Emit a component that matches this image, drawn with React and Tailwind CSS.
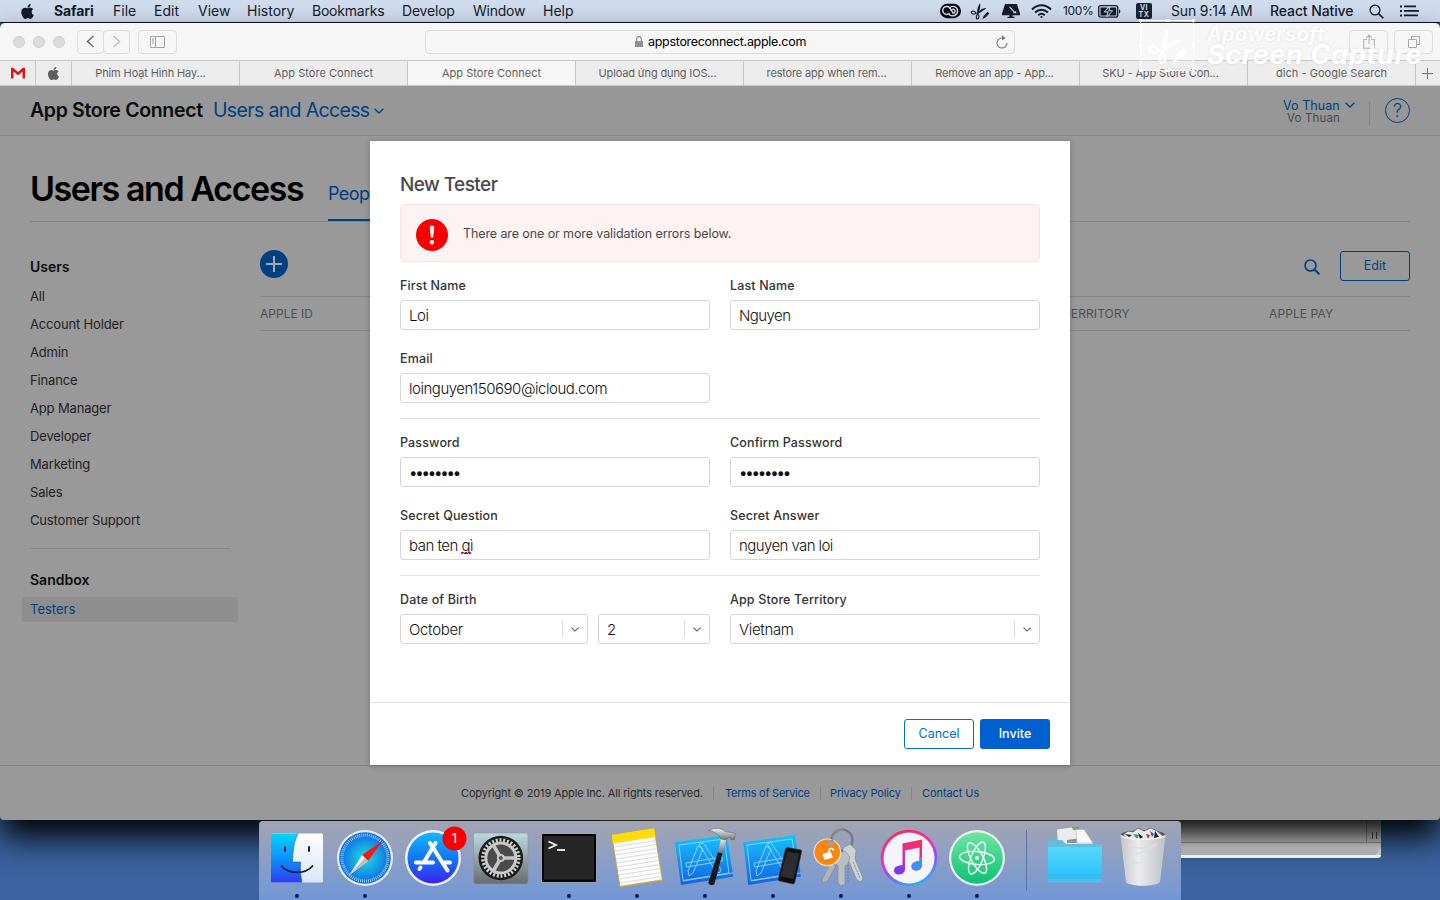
import React from "react";
import { FaApple } from "react-icons/fa";

const menus = [
  ["Safari", "w-[59px] font-bold tracking-[-0.1px]"],
  ["File", "w-[41px]"],
  ["Edit", "w-[44px]"],
  ["View", "w-[49px]"],
  ["History", "w-[65px]"],
  ["Bookmarks", "w-[90px] tracking-[-0.22px]"],
  ["Develop", "w-[71px] tracking-[-0.2px]"],
  ["Window", "w-[70px] tracking-[-0.25px]"],
  ["Help", "w-[40px]"],
];

function Scissors({ className, pencil }) {
  return (
    <svg viewBox="0 0 40 36" className={className} fill="none" stroke="currentColor">
      <ellipse cx="6" cy="20.5" rx="4.6" ry="3" strokeWidth="2.4" transform="rotate(12 6 20.5)" />
      <ellipse cx="15" cy="29" rx="2.7" ry="4.8" strokeWidth="2.4" transform="rotate(8 15 29)" />
      <path d="M9.5 21.5 L16 22.5 L33 11.5 C30 11 25 12 21 15 L16 20Z" fill="currentColor" strokeWidth="0.5" />
      <path d="M15.5 25 L14 20 C14 12 17 5 20 1 C21 6 20 13 17.5 19Z" fill="currentColor" strokeWidth="0.5" />
      {pencil && <path d="M36 18.5 L40 22 L31 31 L25 34 L27.5 27.5Z" fill="currentColor" stroke="none" />}
    </svg>
  );
}

function MenuBar() {
  return (
    <div className="flex h-[23px] shrink-0 items-center border-b border-[#06101f] bg-[#cfdcee] text-[14px] leading-[22px] text-[#141b2b]">
      <FaApple className="mr-[18px] ml-[19px] h-[17px] w-[17px]" />
      {menus.map(([label, cls]) => (
        <span key={label} className={"shrink-0 whitespace-nowrap " + cls}>{label}</span>
      ))}
      <div className="ml-auto flex items-center">
        <svg className="mr-[9px] h-[16px] w-[21px]" viewBox="0 0 22 16">
          <path d="M7.500.500h7a7.500 7.500 0 0 1 0 15h-7a7.500 7.500 0 0 1 0-15Z" fill="#05070d" />
          <g fill="none" stroke="#cfdcee" strokeWidth="1.500" strokeLinecap="round">
            <path d="M9.800 10.600A4.200 4.200 0 1 1 10.600 5.200L13.500 9.600" />
            <path d="M9.400 11.600c3.200 2.600 9 1.500 9-3.600 0-5-6-6.200-8.400-3" />
            <path d="M11.800 7.200c1-2 4-1.200 4 .9 0 1.500-1.200 2.200-2.600 2.100" />
          </g>
        </svg>
        <Scissors pencil className="mr-[12px] h-[17px] w-[20px]" />
        <svg className="mr-[11px] h-[16px] w-[18px]" viewBox="0 0 18 16" fill="#141b2b">
          <path d="M3 1h12l3 9.500H0Z" />
          <path d="M0 10h18v2.200H0zM7.500 12h3v2h-3zM5.500 13.800h7V15h-7z" />
          <path d="m7.600 3.800 5.200 5.800" stroke="#cfdcee" strokeWidth="1.100" />
          <path d="M11.300 9.200 14 8l.5 2.200h-3Z" fill="#cfdcee" />
        </svg>
        <svg className="mr-[11px] h-[15px] w-[21px]" viewBox="0 0 21 15" fill="none" stroke="#141b2b" strokeWidth="1.900">
          <path d="M1 5.500C6.500-.2 14.500-.2 20 5.500M4 8.500c3.800-3.700 9.200-3.700 13 0M7.200 11.300c2-1.900 4.600-1.900 6.600 0" />
          <circle cx="10.500" cy="13" r="1.100" fill="#141b2b" stroke="none" />
        </svg>
        <span className="mr-[4px] w-[31px] text-[12px] tracking-[-0.3px]">100%</span>
        <svg className="mr-[15px] h-[13px] w-[23px]" viewBox="0 0 23 13">
          <rect x=".7" y=".7" width="19" height="11.500" rx="2" fill="none" stroke="#141b2b" strokeWidth="1.300" />
          <path d="M2.500 2.500h7L5.800 7.300h3.700L8.500 10.500h-6ZM12.500 2.500h5.700v8H11l3.600-5h-3.400Z" fill="#141b2b" />
          <path d="m12 1-5.500 5.800h3.800L8.700 12l6-6.200h-4Z" fill="#141b2b" stroke="#cfdcee" strokeWidth=".8" />
          <path d="M21 4.500c1.800.5 1.800 3.500 0 4Z" fill="#141b2b" />
        </svg>
        <div className="mr-[19px] flex h-[16px] w-[16px] flex-col items-center justify-center rounded-[2px] bg-[#1b2333] text-[7px] leading-[7px] font-bold tracking-[0.5px] text-[#cfdcee]">
          <span>VI</span>
          <span>TX</span>
        </div>
        <span className="w-[99px] whitespace-nowrap tracking-[-0.15px]">Sun 9:14 AM</span>
        <span className="w-[99px] whitespace-nowrap font-medium tracking-[-0.1px]">React Native</span>
        <svg className="mr-[16px] h-[15px] w-[15px]" viewBox="0 0 15 15" fill="none" stroke="#141b2b" strokeWidth="1.300">
          <circle cx="6" cy="6" r="4.900" />
          <path d="m9.600 9.600 4.700 4.700" strokeWidth="1.600" />
        </svg>
        <svg className="mr-[21px] h-[12px] w-[19px]" viewBox="0 0 19 12" fill="#141b2b">
          <path d="M0 .5h2v2H0zM0 5h2v2H0zM0 9.500h2v2H0zM4 .5h12v1.800H4zM4 5h15v1.800H4zM4 9.500h14v1.800H4z" />
        </svg>
      </div>
    </div>
  );
}

const btn = "flex h-[24px] items-center justify-center rounded-[4px] border border-[#dcdcdc] bg-[#f6f6f6]";

function Toolbar() {
  return (
    <div className="flex h-[37px] shrink-0 items-center rounded-t-[5px] bg-[#f6f6f6]">
      <div className="ml-[13px] flex gap-[8px]">
        {[0, 1, 2].map((i) => (
          <span key={i} className="h-[12px] w-[12px] rounded-full border border-[#cecece] bg-[#dcdcdc]" />
        ))}
      </div>
      <div className={btn + " ml-[12px] w-[27px]"}>
        <svg className="h-[13px] w-[9px]" viewBox="0 0 9 13" fill="none" stroke="#6c6c6c" strokeWidth="1.500"><path d="M7.500 1 1.500 6.500l6 5.500" /></svg>
      </div>
      <div className={btn + " -ml-px w-[27px]"}>
        <svg className="h-[13px] w-[9px]" viewBox="0 0 9 13" fill="none" stroke="#bcbcbc" strokeWidth="1.400"><path d="m1.500 1 6 5.500-6 5.500" /></svg>
      </div>
      <div className={btn + " ml-[8px] w-[39px]"}>
        <svg className="h-[12px] w-[15px]" viewBox="0 0 15 12" fill="none" stroke="#a4a4a4"><path d="M.5.5h14v11H.5zM5.500.5v11M2 3h2M2 5h2M2 7h2" /></svg>
      </div>
      <div className="ml-[248px] flex h-[24px] w-[590px] items-center rounded-[4px] border border-[#dcdcdc] text-[12.500px] text-black">
        <svg className="ml-[209px] h-[11px] w-[8px]" viewBox="0 0 8 11"><path d="M0 5h8v6H0z" fill="#909090" /><path d="M1.700 5V3a2.300 2.300 0 0 1 4.600 0v2" fill="none" stroke="#909090" strokeWidth="1.200" /></svg>
        <span className="mt-[2px] ml-[5px] tracking-[-0.3px]">appstoreconnect.apple.com</span>
        <svg className="mr-[6px] ml-auto h-[14px] w-[12px]" viewBox="0 0 12 14" fill="none" stroke="#767676" strokeWidth="1.100"><path d="M7 3H6a5 5 0 1 0 5 5" /><path d="m6 .5 3.700 2.500L6 5.500Z" fill="#767676" stroke="none" /></svg>
      </div>
      <div className={btn + " ml-auto w-[39px]"}>
        <svg className="h-[15px] w-[12px]" viewBox="0 0 12 15" fill="none" stroke="#b4b4b4" strokeWidth="1.100"><path d="M4 5.500H.7v8.800h10.600V5.500H8M6 10V1M3 3.800 6 .9l3 2.900" /></svg>
      </div>
      <div className={btn + " mr-[7px] ml-[6px] w-[39px]"}>
        <svg className="h-[12px] w-[12px]" viewBox="0 0 12 12" fill="none" stroke="#aaa"><path d="M.5 3.500h8v8h-8zM3.500 3.500v-3h8v8h-3" /></svg>
      </div>
    </div>
  );
}

const tabs = [
  ["Phim Hoạt Hình Hay...", "tracking-[-0.12px] pr-[10px]"],
  ["App Store Connect", "tracking-[0.03px]"],
  ["App Store Connect", "tracking-[0.03px] !bg-[#f6f6f6]"],
  ["Upload ứng dụng IOS...", "tracking-[-0.14px] pr-[4px]"],
  ["restore app when rem...", "tracking-[-0.16px] pr-[2px]"],
  ["Remove an app - App...", "tracking-[-0.16px] pr-[2px]"],
  ["SKU - App Store Con...", "tracking-[-0.13px] pr-[6px]"],
  ["dich - Google Search", "tracking-[0.04px]"],
];

function TabBar() {
  return (
    <div className="flex h-[26px] shrink-0 border-y border-[#c9c9c9] bg-[#ececec] text-[11px] text-[#626262]">
      <div className="flex w-[36px] items-center justify-center border-r border-[#c6c6c6]">
        <svg className="ml-[1px] h-[12px] w-[14px]" viewBox="0 0 15 12"><path d="M1 1h13v11H1z" fill="#f7f3f3" /><path d="M0 12V.5h2.200L7.500 5 12.800.5H15V12h-2.600V4.300L7.500 8.400 2.600 4.300V12Z" fill="#e5100f" /></svg>
      </div>
      <div className="flex w-[36px] items-center justify-center border-r border-[#c6c6c6]">
        <FaApple className="h-[15px] w-[15px] text-[#5f5f5f]" />
      </div>
      {tabs.map(([t, c], i) => (
        <div key={i} className={"flex w-[168px] items-center justify-center whitespace-nowrap border-r border-[#c6c6c6] bg-[#ececec] " + c}>{t}</div>
      ))}
      <div className="flex flex-1 items-center justify-center pr-[2px]">
        <svg className="h-[11px] w-[11px]" viewBox="0 0 11 11" stroke="#757575"><path d="M5.500 0v11M0 5.500h11" /></svg>
      </div>
    </div>
  );
}

function Watermark() {
  return (
    <div className="absolute top-[20px] left-[1140px] z-20 flex h-[51px] text-white">
      <div className="relative flex h-[51px] w-[54px] items-center justify-center border border-white bg-white/15">
        <Scissors pencil className="mt-[2px] h-[36px] w-[41px]" />
        <span className="absolute -top-[2px] -left-[2px] h-[3px] w-[3px] bg-white" />
        <span className="absolute -top-[2px] left-[25px] h-[3px] w-[3px] bg-white" />
        <span className="absolute -top-[2px] -right-[2px] h-[3px] w-[3px] bg-white" />
        <span className="absolute top-[23px] -left-[2px] h-[3px] w-[3px] bg-white" />
        <span className="absolute top-[23px] -right-[2px] h-[3px] w-[3px] bg-white" />
        <span className="absolute -bottom-[2px] -left-[2px] h-[3px] w-[3px] bg-white" />
        <span className="absolute left-[25px] -bottom-[2px] h-[3px] w-[3px] bg-white" />
        <span className="absolute -right-[2px] -bottom-[2px] h-[3px] w-[3px] bg-white" />
      </div>
      <div className="ml-[13px] flex flex-col whitespace-nowrap italic [text-shadow:0_0_3px_rgba(0,0,0,0.1)]">
        <span className="mt-[3px] text-[20px] leading-[22px] font-semibold tracking-[0.5px]">Apowersoft</span>
        <span className="text-[27px] leading-[20px] font-bold tracking-[0.65px]">Screen Capture</span>
      </div>
    </div>
  );
}

function Chevron({ className }) {
  return (
    <svg className={className} viewBox="0 0 10 6" fill="none" stroke="currentColor" strokeWidth="1.300"><path d="m.6.8 4.400 4.200L9.400.8" /></svg>
  );
}

const sideItems = ["All", "Account Holder", "Admin", "Finance", "App Manager", "Developer", "Marketing", "Sales", "Customer Support"];

function Page() {
  return (
    <div className="flex h-full flex-col rounded-b-[4px] bg-[#999] text-[#1f1f1f]">
      <header className="flex h-[50px] shrink-0 items-center border-b border-[#868686] bg-[#979797] pl-[30px]">
        <span className="w-[183px] whitespace-nowrap text-[19.500px] font-semibold tracking-[-0.33px] text-[#0b0b0b]">App Store Connect</span>
        <span className="w-[161px] whitespace-nowrap text-[19.500px] tracking-[-0.65px] text-[#003f83]">Users and Access</span>
        <Chevron className="mt-[1px] h-[6px] w-[10px] text-[#003f83]" />
        <div className="ml-auto flex items-center">
          <div className="mt-[2px] mr-[14px] flex flex-col text-[12.500px] leading-[13px]">
            <span className="flex items-center text-[#003f83]"><span className="w-[62px] whitespace-nowrap tracking-[0.05px]">Vo Thuan</span><Chevron className="h-[6px] w-[10px]" /></span>
            <span className="ml-[4px] text-[11.500px] tracking-[0.15px] text-[#4a4a4a]">Vo Thuan</span>
          </div>
          <span className="mt-[4px] h-[24px] w-px bg-[#858585]" />
          <span className="mr-[30px] ml-[15px] flex h-[25px] w-[25px] items-center justify-center rounded-full border border-[#003f83] text-[18px] font-light text-[#003f83]">?</span>
        </div>
      </header>
      <div className="mx-[30px] flex h-[86px] shrink-0 items-end border-b border-[#858585]">
        <h1 className="mb-[10px] w-[298px] whitespace-nowrap text-[34px] leading-[44px] font-semibold tracking-[-1.42px] text-black">Users and Access</h1>
        <span className="flex h-[46px] w-[62px] items-center border-b-[2px] border-[#003f83] pb-[7px] text-[18px] tracking-[-0.6px] text-[#003f83]">People</span>
      </div>
      <div className="flex flex-1 px-[30px]">
        <aside className="flex w-[200px] shrink-0 flex-col pt-[31px] text-[13px]">
          <div className="h-[28px] text-[14px] leading-[28px] font-semibold text-[#0c0c0c]">Users</div>
          {sideItems.map((s) => (
            <div key={s} className="h-[28px] whitespace-nowrap leading-[30px] tracking-[-0.16px]">{s}</div>
          ))}
          <div className="mt-[15px] h-px bg-[#858585]" />
          <div className="mt-[17px] h-[31px] text-[14px] leading-[28px] font-semibold text-[#0c0c0c]">Sandbox</div>
          <div className="-mx-[8px] h-[25px] rounded-[3px] bg-[#8e8e8e] px-[8px] leading-[25px] text-[#003f83]">Testers</div>
        </aside>
        <main className="ml-[30px] flex flex-1 flex-col">
          <div className="flex h-[74px] items-center">
            <span className="mt-[10px] flex h-[28px] w-[28px] items-center justify-center rounded-full bg-[#003f83]">
              <svg className="h-[16px] w-[16px]" viewBox="0 0 16 16" stroke="#a9a9a9" strokeWidth="2"><path d="M8 0v16M0 8h16" /></svg>
            </span>
            <svg className="mt-[16px] mr-[20px] ml-auto h-[16px] w-[16px]" viewBox="0 0 16 16" fill="none" stroke="#003f83" strokeWidth="1.600"><circle cx="6.500" cy="6.500" r="5.500" /><path d="m10.300 10.300 5 5" strokeWidth="2" /></svg>
            <span className="mt-[14px] flex h-[30px] w-[70px] items-center justify-center rounded-[3px] border border-[#003f83] text-[12.500px] text-[#003f83]">Edit</span>
          </div>
          <div className="flex h-[35px] items-center border-y border-[#858585] text-[12px] text-[#4f4f4f]">
            <span className="w-[803px] tracking-[0.02px]">APPLE ID</span>
            <span className="w-[206px] tracking-[0.1px]">TERRITORY</span>
            <span className="tracking-[0.1px]">APPLE PAY</span>
          </div>
        </main>
      </div>
      <footer className="flex h-[55px] shrink-0 items-center border-t border-[#858585] pl-[461px] text-[11px] whitespace-nowrap text-[#003f83]">
        <span className="w-[252px] tracking-[-0.14px] text-[#2a2a2a]">Copyright © 2019 Apple Inc. All rights reserved.</span>
        <span className="mr-[11px] h-[13px] w-px bg-[#858585]" />
        <span className="w-[95px] tracking-[-0.24px]">Terms of Service</span>
        <span className="mr-[9px] h-[13px] w-px bg-[#858585]" />
        <span className="w-[81px] tracking-[-0.15px]">Privacy Policy</span>
        <span className="mr-[10px] h-[13px] w-px bg-[#858585]" />
        <span className="tracking-[-0.08px]">Contact Us</span>
      </footer>
    </div>
  );
}

const box = "flex h-[30px] items-center rounded-[3px] border border-[#d6d6d6] bg-white pl-[8px] pt-[2px] text-[15px] font-light whitespace-nowrap text-[#111]";

function Field({ label, children }) {
  return (
    <div className="flex w-[310px] flex-col">
      <label className="mb-[4px] h-[21px] text-[12.500px] leading-[22px] font-medium tracking-[0.14px] text-[#333]">{label}</label>
      {children}
    </div>
  );
}

function SelectBox({ className, children }) {
  return (
    <div className={box + " " + className}>
      <span className="tracking-[-0.33px]">{children}</span>
      <span className="mb-[2px] ml-auto flex h-[18px] w-[25px] items-center justify-center border-l border-[#ddd]">
        <Chevron className="h-[5px] w-[8px] text-[#555]" />
      </span>
    </div>
  );
}

function Modal() {
  return (
    <div className="absolute top-[141px] left-[370px] z-10 flex h-[624px] w-[700px] flex-col bg-white shadow-[0_1px_6px_rgba(0,0,0,0.25)]">
      <div className="flex flex-1 flex-col px-[30px] pt-[30px]">
        <h2 className="h-[33px] text-[19px] leading-[27px] font-medium tracking-[-0.57px] text-[#494949]">New Tester</h2>
        <div className="flex h-[58px] items-center rounded-[4px] border border-[#ffe0e0] bg-[#fff2f2] pl-[15px]">
          <svg className="mt-[3px] h-[32px] w-[32px]" viewBox="0 0 31 31"><circle cx="15.500" cy="15.500" r="15.500" fill="#f80000" /><path d="M13.400 8.300a2.100 2.100 0 0 1 4.200 0L16.700 18h-2.400Z" fill="#fff" /><circle cx="15.500" cy="22.500" r="2.100" fill="#fff" /></svg>
          <span className="mt-[2px] ml-[15px] text-[12.500px] tracking-[-0.1px] text-[#494949]">There are one or more validation errors below.</span>
        </div>
        <div className="mt-[13px] flex gap-[20px]">
          <Field label="First Name"><div className={box + " tracking-[-0.4px]"}>Loi</div></Field>
          <Field label="Last Name"><div className={box + " tracking-[-0.55px]"}>Nguyen</div></Field>
        </div>
        <div className="mt-[18px] flex border-b border-[#e3e3e3] pb-[15px]">
          <Field label="Email"><div className={box + " tracking-[-0.47px]"}>loinguyen150690@icloud.com</div></Field>
        </div>
        <div className="mt-[13px] flex gap-[20px]">
          {["Password", "Confirm Password"].map((l) => (
            <Field key={l} label={l}>
              <div className={box + " !text-[15px] !font-normal tracking-[-2.200px]"}>••••••••</div>
            </Field>
          ))}
        </div>
        <div className="mt-[18px] flex gap-[20px] border-b border-[#e3e3e3] pb-[15px]">
          <Field label="Secret Question">
            <div className={box + " tracking-[-0.5px]"}>
              <span>ban ten <span className="underline decoration-[#ee1122] decoration-dotted decoration-[2px] underline-offset-[2px] [text-decoration-skip-ink:none]">gì</span></span>
            </div>
          </Field>
          <Field label="Secret Answer"><div className={box + " tracking-[-0.58px]"}>nguyen van loi</div></Field>
        </div>
        <div className="mt-[13px] flex gap-[20px]">
          <Field label="Date of Birth">
            <div className="flex gap-[10px]">
              <SelectBox className="w-[188px]">October</SelectBox>
              <SelectBox className="w-[112px]">2</SelectBox>
            </div>
          </Field>
          <Field label="App Store Territory"><SelectBox className="w-[310px]">Vietnam</SelectBox></Field>
        </div>
      </div>
      <div className="flex h-[63px] shrink-0 items-center justify-end gap-[6px] border-t border-[#e3e3e3] pr-[20px] text-[12.500px]">
        <button className="h-[30px] w-[70px] rounded-[3px] border border-[#0070c9] text-[#0070c9]">Cancel</button>
        <button className="h-[30px] w-[70px] rounded-[3px] bg-[#0060d0] font-medium text-white">Invite</button>
      </div>
    </div>
  );
}

function Lattice() {
  return (
    <g fill="none" stroke="#9fe3ff" strokeWidth=".9" opacity=".85">
      <path d="m8 24 45-6 5 34-46 7.500ZM12 60l50-8" />
      <path d="m28 23 4-1.500 18 27-1.500 3.500-4-2Zm-1 2-10 25 1 5 4-3 10-24ZM15 42l36-6 .5 4-36 6Z" />
    </g>
  );
}

const icons = [
  <g>
    <defs>
      <linearGradient id="fa" x2="0" y2="1"><stop stopColor="#06d4fd" /><stop offset=".5" stopColor="#0a94fe" /><stop offset="1" stopColor="#2f3cf0" /></linearGradient>
      <linearGradient id="fb" x2="0" y2="1"><stop stopColor="#fdfeff" /><stop offset="1" stopColor="#d9e7f5" /></linearGradient>
    </defs>
    <rect x="8" y="12.500" width="52" height="49" rx="1.500" fill="url(#fb)" />
    <path d="M9 12.500h26C31 20 30 29 29.500 41h8c-.2 8 .2 14 1.500 20.500H9a1 1 0 0 1-1-1v-47a1 1 0 0 1 1-1Z" fill="url(#fa)" />
    <path d="M35 12.500C31 20 30 29 29.500 41h8c-.2 8 .2 14 1.500 20.500" fill="none" stroke="#20598f" strokeWidth=".6" />
    <path d="M22 26v4M46 26v4" stroke="#12203a" strokeWidth="2" strokeLinecap="round" />
    <path d="M18.500 45c7 8.500 24 8.500 31 0" fill="none" stroke="#101a30" strokeWidth="1.700" strokeLinecap="round" />
  </g>,
  <g>
    <defs><radialGradient id="sa"><stop stopColor="#1fe0e0" /><stop offset="1" stopColor="#1067e6" /></radialGradient></defs>
    <circle cx="34" cy="37" r="28" fill="#e9ecef" />
    <circle cx="34" cy="37" r="25.800" fill="url(#sa)" />
    <circle cx="34" cy="37" r="23" fill="none" stroke="#c7ecff" strokeWidth="3" strokeDasharray=".7 1.300" />
    <path d="M52 19.500 31 34l6 6Z" fill="#fb1616" />
    <path d="M18 54.500 31 34l6 6Z" fill="#f2f2f2" />
    <path d="m18 54.500 16-17.500 3 3Z" fill="#bcbcbc" />
  </g>,
  <g>
    <defs><linearGradient id="as" x2="0" y2="1"><stop stopColor="#12b7ff" /><stop offset=".5" stopColor="#1277fb" /><stop offset="1" stopColor="#3b22ee" /></linearGradient></defs>
    <circle cx="34" cy="37" r="28" fill="#eef0f5" />
    <circle cx="34" cy="37" r="25.500" fill="url(#as)" />
    <g stroke="#fff" strokeWidth="4" strokeLinecap="round">
      <path d="M36.500 22 25 41M31 22l17.500 27.500M17 41.500h17M44 41.500h7M21.500 46.500l-1 1.500" />
    </g>
    <circle cx="55.500" cy="17.500" r="12" fill="#f70000" />
    <text x="55.500" y="22.300" textAnchor="middle" fontSize="13" fill="#fff" fontFamily="Inter, sans-serif">1</text>
  </g>,
  <g>
    <defs><linearGradient id="st" x2="0" y2="1"><stop stopColor="#bcd9df" /><stop offset="1" stopColor="#686c70" /></linearGradient></defs>
    <rect x="6.500" y="12" width="54.500" height="51" rx="2" fill="url(#st)" stroke="#8b9499" strokeWidth=".6" />
    <circle cx="33.800" cy="37" r="22.300" fill="#1c1c1c" />
    <circle cx="33.800" cy="37" r="18" fill="none" stroke="#d2d2d2" strokeWidth="3.500" strokeDasharray="2 1.770" />
    <circle cx="33.800" cy="37" r="15" fill="#4a4a4a" stroke="#c9c9c9" strokeWidth="3" />
    <path d="M33.800 37h15M33.800 37l-7.500-13M33.800 37l-7.500 13" stroke="#c5c5c5" strokeWidth="3.600" />
    <circle cx="33.800" cy="37" r="4" fill="#c5c5c5" /><circle cx="33.800" cy="37" r="2" fill="#555" />
  </g>,
  <g>
    <rect x="6.500" y="12.500" width="55" height="49" rx="1.500" fill="#050505" stroke="#a9bcc4" strokeWidth=".8" />
    <rect x="9" y="15" width="50" height="43.500" fill="#262626" />
    <path d="m13.500 20.500 7.500 3.500-7.500 3.500" fill="none" stroke="#f4f4f4" strokeWidth="1.800" /><path d="M22 29h8" stroke="#f4f4f4" strokeWidth="1.800" />
  </g>,
  <g>
    <path d="M8.700 14 51 7.300 59.300 59 17 65.700Z" fill="#fbfbfb" stroke="#c6a321" strokeWidth=".8" />
    <path d="M8.700 14 51 7.300l1.600 8.700L10 22.500Z" fill="#ffdb0c" />
    <path d="m11 26 42-6.500M11.600 30l42-6.500M12.300 34l42-6.500M13 38l42-6.500M13.600 42l42-6.500M14.300 46l42-6.500M15 50l42-6.500M15.600 54l42-6.500M16.300 58l42-6.500M17 62l42-6.500" stroke="#cfcfcf" strokeWidth=".7" />
    <path d="m17 65.700 42.300-6.700" stroke="#d8b21c" strokeWidth="1.200" />
  </g>,
  <g>
    <defs>
      <linearGradient id="xc" x2="0" y2="1"><stop stopColor="#16c2fc" /><stop offset="1" stopColor="#1462e2" /></linearGradient>
      <linearGradient id="hm" x2="0" y2="1"><stop stopColor="#f1f1f1" /><stop offset="1" stopColor="#707070" /></linearGradient>
    </defs>
    <path d="m4 21.300 51.700-7.300 6.600 41.700L10 64Z" fill="url(#xc)" /><Lattice />
    <path d="m47 31 4.500 1.200-8 30.500c-1 2.500-6.500 1.500-6-1.500Z" fill="#1b1b1d" />
    <path d="m50 17 5.500 1.300L51.500 32.500 47 31.300Z" fill="url(#hm)" />
    <path d="M37.500 10c5-3.500 11-3 15-1 1.500 1.700 3 2.300 5 2l3 .5 4 1-1 6-3 .5-2-3-4 3-5-1c-1-4-5-7-11-8.500Z" fill="url(#hm)" stroke="#5d6165" strokeWidth=".5" />
  </g>,
  <g>
    <path d="m4.300 21.300 51.700-7.300 6 41.700L9.300 64Z" fill="url(#xc)" /><Lattice />
    <path d="m48.500 26.500 13 2.200q1.500.3 1.200 2l-7 31q-.4 1.500-2 1.300L40.500 60q-1.700-.3-1.300-2L46.500 28q.4-1.600 2-1.500Z" fill="#0d0d0e" stroke="#444" strokeWidth=".5" />
    <path d="m48 30.500 12.500 2L54.500 58 41.500 55.500Z" fill="#2c2d30" />
  </g>,
  <g>
    <circle cx="35" cy="19" r="10.500" fill="none" stroke="#74777c" strokeWidth="2.200" />
    <g stroke="#777c80" strokeWidth=".5">
      <path d="m23 42 6 3-9 16-4 1-1-3Z" fill="#aeb4b6" />
      <path d="m36 27 7-4 6 6-1 9 8 19-2 4-4-2-8-18-6-4Z" fill="#c9d3d4" />
      <path d="m30 33 8-3 5 6-2 7-3 2v18l-4 2-3-3V45l-4-4Z" fill="#b8bfc0" />
    </g>
    <path d="M41 44v18M46 41l7 16" stroke="#777" strokeWidth=".8" strokeDasharray="2 1" />
    <circle cx="20.300" cy="31.300" r="13.300" fill="#fa8610" stroke="#e8e1d9" strokeWidth="1.200" />
    <circle cx="23.500" cy="22.500" r="3" fill="#98a0b4" />
    <path d="m15.500 33 8-2.500 2.500 6-8.500 2.500Z" fill="#fff" /><path d="M22 31c-.5-4 3.500-5 4.500-1.500" fill="none" stroke="#fff" strokeWidth="1.400" />
    <path d="M25 21c0-6 4-12 11-12.500" fill="none" stroke="#8b8f95" strokeWidth="2" />
  </g>,
  <g>
    <defs>
      <linearGradient id="it" x1=".3" x2=".7" y2="1"><stop stopColor="#fb2a4e" /><stop offset=".45" stopColor="#f12bc9" /><stop offset=".6" stopColor="#9c49f0" /><stop offset="1" stopColor="#20b9f8" /></linearGradient>
      <linearGradient id="nt" x1=".6" x2=".4" y2="1"><stop stopColor="#fb2d55" /><stop offset=".5" stopColor="#d52bc0" /><stop offset="1" stopColor="#6b3cf5" /></linearGradient>
    </defs>
    <circle cx="34" cy="37" r="28.300" fill="url(#it)" /><circle cx="34" cy="37" r="25.500" fill="#f5f4f8" />
    <path d="M27.500 22.500 47 18.500V44c0 7-10.500 7-10.500 1.500 0-4 4-5 8-5.500V26.500l-14.500 3V48c0 7-11 7-11 1.500 0-4 4-5 8.500-5.500Z" fill="url(#nt)" />
    <path d="M47 36v8c0 7-10.500 7-10.500 1.500 0-4 4-5 8-5.500v-4Z" fill="#3a90f8" />
  </g>,
  <g>
    <defs><linearGradient id="at" x2="0" y2="1"><stop stopColor="#6fe5a0" /><stop offset="1" stopColor="#0cc276" /></linearGradient></defs>
    <circle cx="34" cy="37" r="28" fill="#eceeee" /><circle cx="34" cy="37" r="25.800" fill="url(#at)" />
    <g fill="none" stroke="#f4fff8" strokeWidth="1.400">
      <ellipse cx="34" cy="37" rx="17.500" ry="6.500" transform="rotate(5 34 37)" />
      <ellipse cx="34" cy="37" rx="17" ry="6" transform="rotate(62 34 37)" />
      <ellipse cx="34" cy="37" rx="17" ry="6" transform="rotate(112 34 37)" />
    </g>
    <circle cx="34" cy="37" r="2" fill="#fff" />
  </g>,
];

function Dock() {
  return (
    <div className="absolute bottom-0 left-[259px] z-20 flex h-[79px] w-[922px] rounded-t-[4px] bg-gradient-to-b from-[#a2a4b2] to-[#7297d6] pl-[4px]">
      {icons.map((ic, i) => (
        <div key={i} className="relative h-[79px] w-[68px] shrink-0">
          <svg className="h-[79px] w-[68px]" viewBox="0 0 68 79">
            {ic}
            {i !== 2 && i !== 3 && <circle cx="34" cy="75" r="2" fill="#04154f" />}
          </svg>
        </div>
      ))}
      <div className="mt-[9px] mr-[14px] ml-[15px] h-[60px] w-px bg-[#5d72a6]" />
      <svg className="h-[79px] w-[68px] shrink-0" viewBox="0 0 68 79">
        <defs><linearGradient id="fo" x2="0" y2="1"><stop stopColor="#56d8fe" /><stop offset=".8" stopColor="#2cc4fb" /><stop offset="1" stopColor="#53bfe8" /></linearGradient></defs>
        <path d="M16 8.500 35 6l6 4 12 14H17Z" fill="#eceaea" /><path d="M31 6h6l1 3h-6ZM26 19l20-3v6H26Z" fill="#55585c" opacity=".6" /><path d="M35 8.500h8L52 22H36Z" fill="#f7f7f7" stroke="#aaa" strokeWidth=".5" />
        <path d="M7 21q0-2 2-2h11q2 0 3 2t3 2h33q2 0 2 2v36H7Z" fill="#63bede" />
        <path d="M7 26h54v34q0 1.500-1.500 1.500h-51Q7 61.500 7 60Z" fill="url(#fo)" />
        <path d="M7 54h54M7 57h54" stroke="#3fa9d8" strokeWidth=".7" />
      </svg>
      <svg className="h-[79px] w-[68px] shrink-0" viewBox="0 0 68 79">
        <defs><linearGradient id="tr"><stop stopColor="#c5c7cb" /><stop offset=".4" stopColor="#f0f0f0" /><stop offset="1" stopColor="#bfc2c8" /></linearGradient></defs>
        <ellipse cx="34" cy="14.500" rx="22.500" ry="5.500" fill="#55575b" />
        <path d="m14 14 5-4 5 1 5-4 6 3 7-3 6 3 6 5-9 5H22Z" fill="#e8e8e8" stroke="#555" strokeWidth=".7" />
        <path d="m16 13 4 3 3-2ZM29 12l5 4-3 2ZM46 10l4 6-5 1Z" fill="#222" /><path d="m24 13 6 1-2 4Z" fill="#21a46d" /><path d="m37 13 4 1-2 4Z" fill="#b3411f" /><path d="m41 10 4 3-2 3Z" fill="#3c4bb0" />
        <path d="M11.500 14.500c8 5 37 5 45 0L51 61c-4 5-30 5-34 0Z" fill="url(#tr)" opacity=".95" />
        <path d="M11.500 14.500c8 5 37 5 45 0" fill="none" stroke="#fff" strokeWidth="1.200" />
        <path d="M20 24c9 5 20 3 28-1-6 5-12 8-22 10M22 40c6 3 14 1 20-3" fill="none" stroke="#dcdde0" strokeWidth="1.400" />
      </svg>
    </div>
  );
}

export default function App() {
  return (
    <div className="relative flex h-[900px] w-[1440px] flex-col overflow-hidden bg-[#3b639f] font-['Inter',sans-serif]">
      <MenuBar />
      <div className="relative z-[1] flex h-[797px] shrink-0 flex-col rounded-[5px] bg-[#06101f] shadow-[0_18px_32px_rgba(0,0,0,0.97)]">
        <Toolbar />
        <TabBar />
        <div className="h-[734px] shrink-0"><Page /></div>
      </div>
      <div className="ml-[600px] flex h-[38px] w-[781px] shrink-0 flex-col rounded-br-[5px] bg-[#ededed]">
        <div className="flex h-[23px] items-center justify-end border-b border-[#aaa] bg-[#e6e6e6]">
          <div className="flex h-full w-[15px] items-center justify-center gap-[3px] border-l border-[#a5a5a5] pt-[8px]">
            <span className="h-[7px] w-px bg-[#555]" />
            <span className="h-[7px] w-px bg-[#555]" />
          </div>
        </div>
        <div className="relative z-[2] mt-[4px] mr-[3px] h-[8px] rounded-r-full bg-[#ababab]" />
        <div className="relative z-[2] h-[3px] rounded-br-[5px] bg-[#ededed]" />
      </div>
      <Modal />
      <Watermark />
      <Dock />
    </div>
  );
}
